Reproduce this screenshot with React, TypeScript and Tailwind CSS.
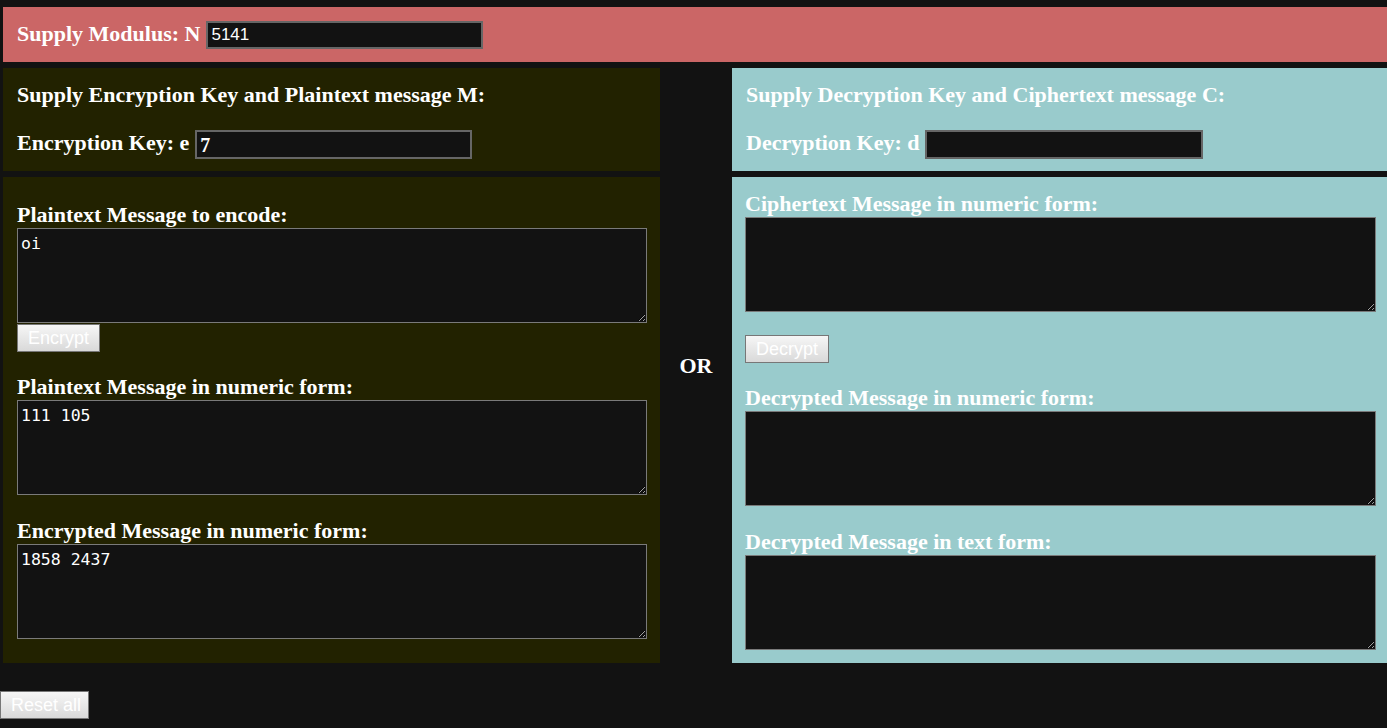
import { useState } from "react";

const serif = "font-['Liberation_Serif','Times_New_Roman',serif]";
const labelCls = `${serif} block text-[22px] font-bold leading-[26px] text-white`;
const areaCls =
  "block w-[630px] h-[95px] bg-[#121212] border border-[#7a7a7a] px-[3px] pt-[5px] text-[16.5px] leading-[19px] text-white font-['DejaVu_Sans_Mono',monospace] outline-none";
const btnCls =
  "h-[28px] px-[10px] whitespace-nowrap bg-gradient-to-b from-[#f6f6f6] to-[#d9d9d9] border border-[#777] text-white text-[18px] leading-[20px] font-['Liberation_Sans',Arial,sans-serif]";

export default function App() {
  const [n, setN] = useState("5141");
  const [e, setE] = useState("7");
  const [d, setD] = useState("");
  const [plain, setPlain] = useState("oi");
  const [plainNum, setPlainNum] = useState("111 105");
  const [encNum, setEncNum] = useState("1858 2437");
  const [cipher, setCipher] = useState("");
  const [decNum, setDecNum] = useState("");
  const [decText, setDecText] = useState("");

  return (
    <div className="min-h-screen w-full bg-[#121212]">
      <div className="pl-[3px] pt-[7px]">
        {/* modulus bar */}
        <div className="flex items-start gap-[6px] bg-[#cb6666] pl-[14px] pt-[14px] pb-[13px]">
          <span className={labelCls}>Supply Modulus: N</span>
          <input
            value={n}
            onChange={(ev) => setN(ev.target.value)}
            className="w-[277px] h-[28px] bg-[#121212] border-2 border-[#666] px-[3px] text-[17px] text-white font-['Liberation_Sans',Arial,sans-serif] outline-none"
          />
        </div>

        <div className="mt-[6px] flex">
          {/* encryption side */}
          <div className="w-[657px] flex flex-col gap-[6px]">
            <div className="bg-[#222200] pl-[14px] pt-[14px] pb-[12px]">
              <span className={labelCls}>Supply Encryption Key and Plaintext message M:</span>
              <div className="mt-[22px] flex items-start gap-[6px]">
                <span className={labelCls}>Encryption Key: e</span>
                <input
                  value={e}
                  onChange={(ev) => setE(ev.target.value)}
                  className={`${serif} w-[277px] h-[29px] bg-[#121212] border-2 border-[#666] px-[3px] text-[20px] font-bold text-white outline-none`}
                />
              </div>
            </div>
            <div className="bg-[#222200] pl-[14px] pt-[25px] pb-[24px]">
              <span className={labelCls}>Plaintext Message to encode:</span>
              <textarea className={areaCls} value={plain} onChange={(ev) => setPlain(ev.target.value)} />
              <button className={`${btnCls} mt-[1px] w-[83px] border-[#3d8fc2]`}>Encrypt</button>
              <span className={`${labelCls} mt-[22px]`}>Plaintext Message in numeric form:</span>
              <textarea className={areaCls} value={plainNum} onChange={(ev) => setPlainNum(ev.target.value)} />
              <span className={`${labelCls} mt-[23px]`}>Encrypted Message in numeric form:</span>
              <textarea className={areaCls} value={encNum} onChange={(ev) => setEncNum(ev.target.value)} />
            </div>
          </div>

          <div className="w-[72px] flex items-center justify-center">
            <span className={`${serif} text-[22px] font-bold text-white`}>OR</span>
          </div>

          {/* decryption side */}
          <div className="flex-1 flex flex-col gap-[6px]">
            <div className="bg-[#99cbcc] pl-[14px] pt-[14px] pb-[12px]">
              <span className={labelCls}>Supply Decryption Key and Ciphertext message C:</span>
              <div className="mt-[22px] flex items-start gap-[5px]">
                <span className={labelCls}>Decryption Key: d</span>
                <input
                  value={d}
                  onChange={(ev) => setD(ev.target.value)}
                  className="w-[278px] h-[29px] bg-[#121212] border-2 border-[#666] px-[3px] text-[17px] text-white outline-none"
                />
              </div>
            </div>
            <div className="bg-[#99cbcc] pl-[13px] pt-[14px] pb-[13px]">
              <span className={labelCls}>Ciphertext Message in numeric form:</span>
              <textarea className={`${areaCls} w-[631px]`} value={cipher} onChange={(ev) => setCipher(ev.target.value)} />
              <button className={`${btnCls} mt-[23px] w-[84px]`}>Decrypt</button>
              <span className={`${labelCls} mt-[22px]`}>Decrypted Message in numeric form:</span>
              <textarea className={`${areaCls} w-[631px]`} value={decNum} onChange={(ev) => setDecNum(ev.target.value)} />
              <span className={`${labelCls} mt-[23px]`}>Decrypted Message in text form:</span>
              <textarea className={`${areaCls} w-[631px]`} value={decText} onChange={(ev) => setDecText(ev.target.value)} />
            </div>
          </div>
        </div>
      </div>

      <button className={`${btnCls} mt-[28px] w-[89px] px-0`}>Reset all</button>
    </div>
  );
}
